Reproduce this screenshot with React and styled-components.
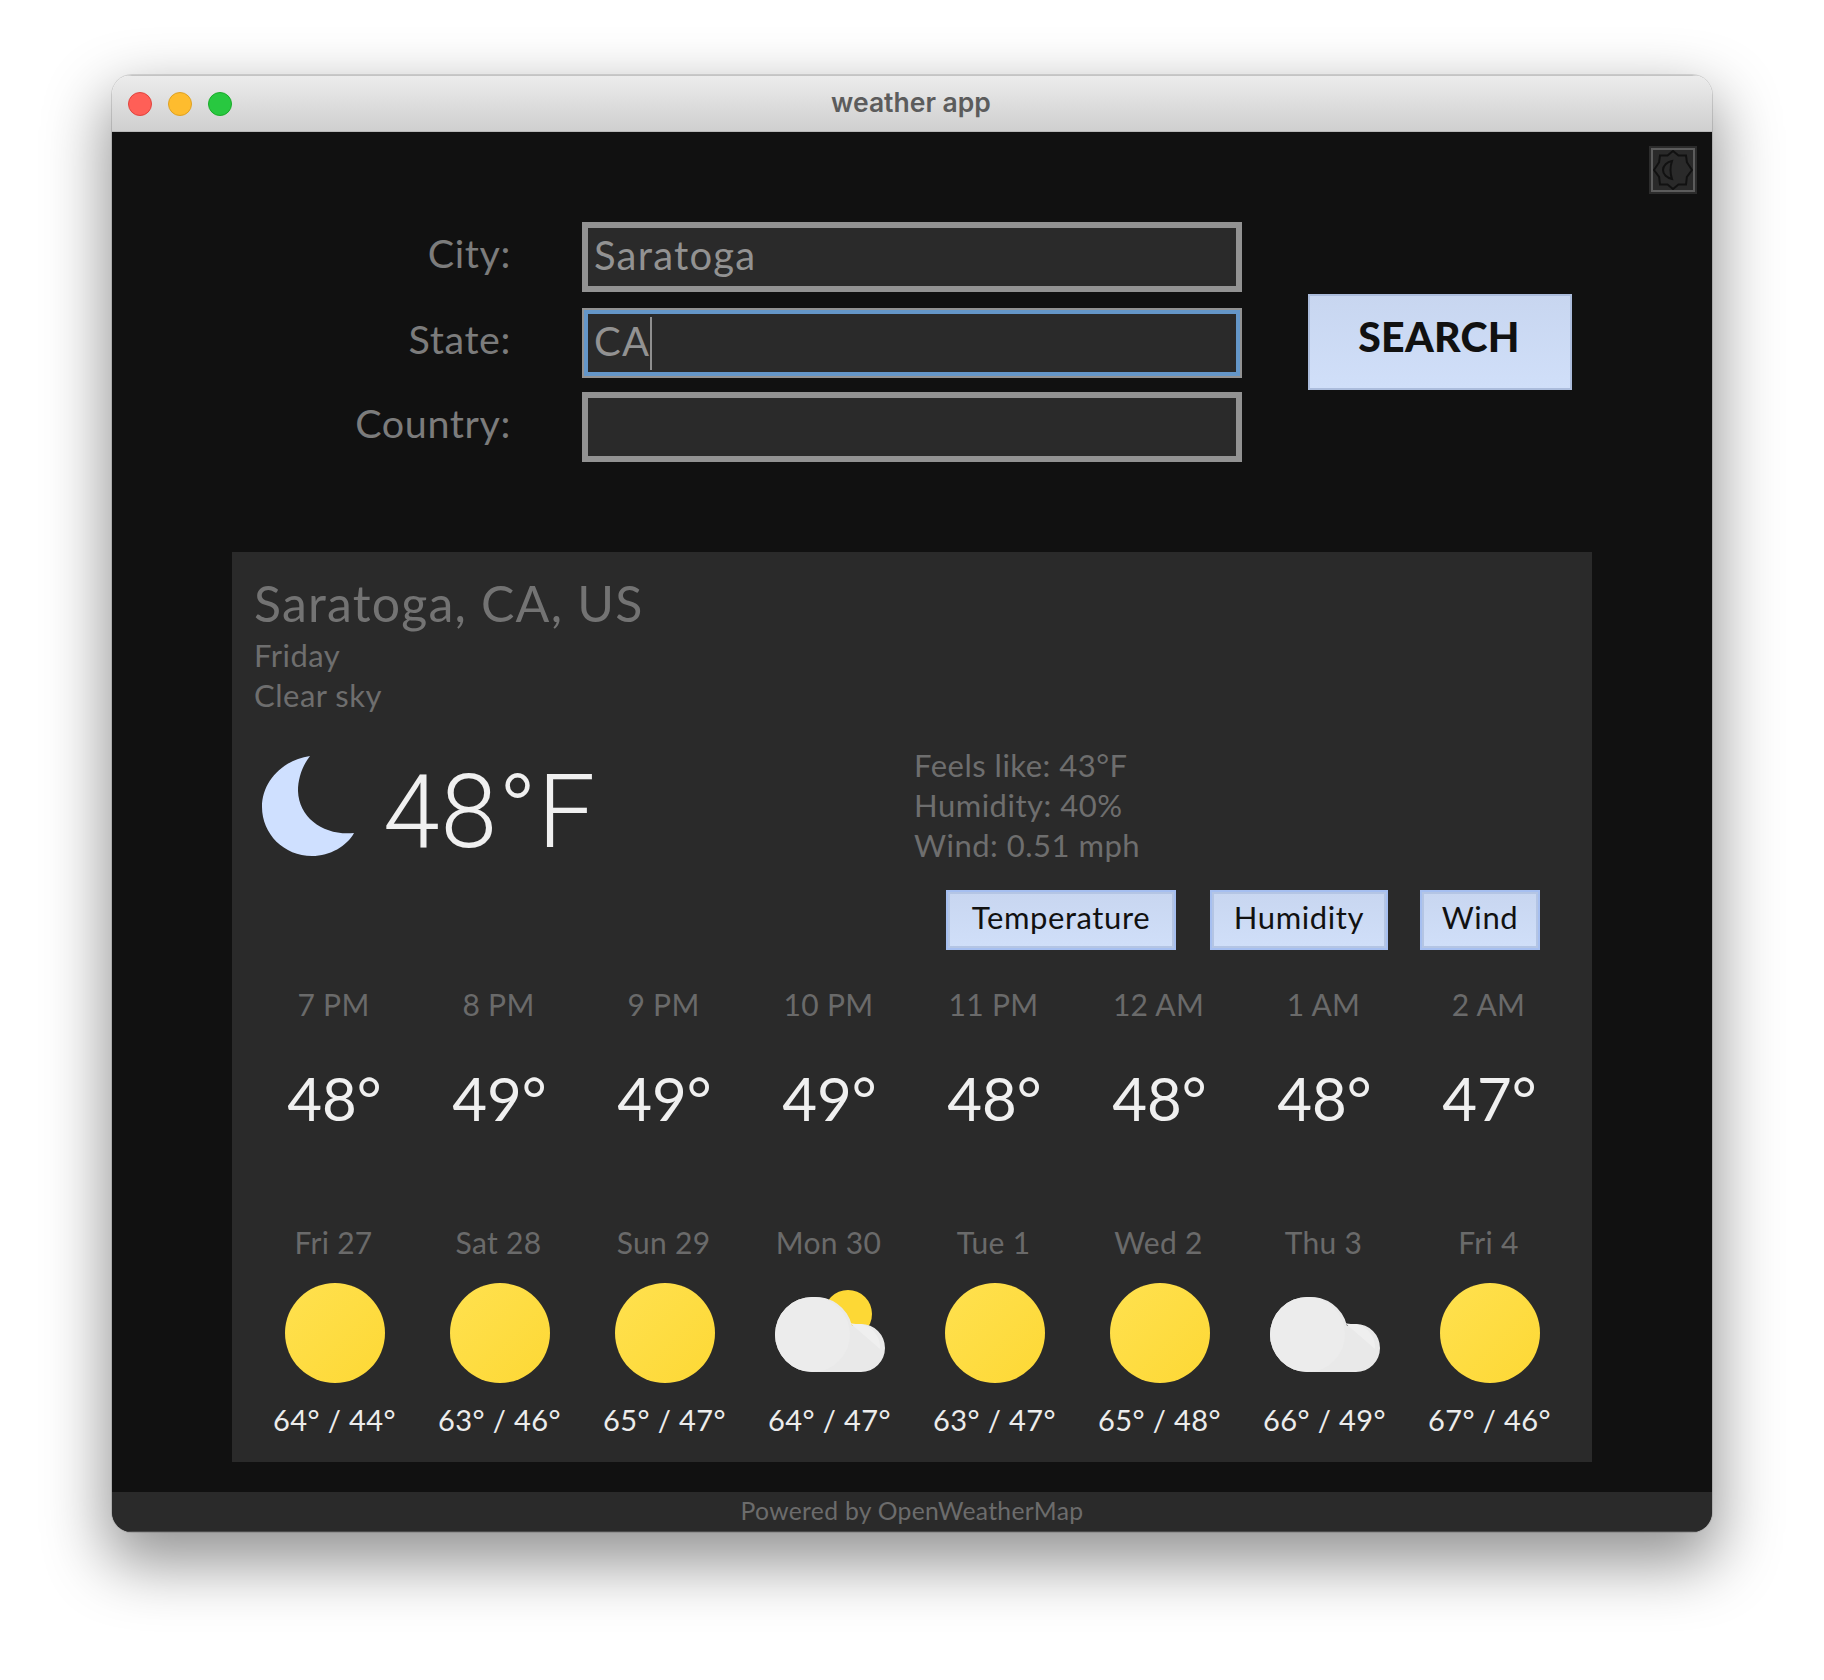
import React from "react";
import styled, { createGlobalStyle } from "styled-components";

const Global = createGlobalStyle`
  html, body { margin: 0; padding: 0; background: #fff; }
  body { font-family: Lato, "Noto Sans", sans-serif; width: 1824px; height: 1680px; overflow: hidden; }
  * { box-sizing: border-box; }
`;

const Page = styled.div`
  padding: 75px 112px 0;
`;
const Window = styled.div`
  width: 1600px;
  height: 1457px;
  border-radius: 20px;
  overflow: hidden;
  display: flex;
  flex-direction: column;
  box-shadow: 0 0 0 1px rgba(0,0,0,.12), 0 26px 62px 6px rgba(0,0,0,.42);
`;
const TitleBar = styled.div`
  height: 57px;
  flex: none;
  display: flex;
  align-items: center;
  position: relative;
  padding-left: 16px;
  gap: 16px;
  background: linear-gradient(#ececec, #cfcfcf);
  border-top: 1px solid #c4c4c4;
  border-bottom: 1px solid #b9b9b9;
`;
const Light = styled.span`
  width: 24px;
  height: 24px;
  border-radius: 50%;
  background: ${p => p.$c};
  border: 1px solid ${p => p.$b};
`;
const WindowTitle = styled.div`
  position: absolute;
  left: 0;
  right: 0;
  top: 13px;
  text-align: center;
  font: 600 26.500px/1 Inter, sans-serif;
  letter-spacing: 0;
  color: #5c5c5c;
  padding-right: 2px;
`;
const Content = styled.div`
  flex: 1;
  background: #111;
  position: relative;
  display: flex;
  flex-direction: column;
`;
const ThemeButton = styled.button`
  position: absolute;
  top: 16px;
  right: 17px;
  width: 44px;
  height: 44px;
  padding: 0;
  background: #2a2a2a;
  border: 2px solid #5c5c5c;
  outline: 2px solid #2c2c2c;
  display: flex;
  align-items: center;
  justify-content: center;
`;
const FormArea = styled.div`
  padding: 90px 0 0 120px;
  display: flex;
  align-items: center;
  gap: 66px;
`;
const FormGrid = styled.div`
  display: grid;
  grid-template-columns: 279px 660px;
  column-gap: 71px;
  grid-template-rows: 86px 84px 70px;
`;
const Label = styled.label`
  font-size: 39.500px;
  color: #7c7c7c;
  text-align: right;
  line-height: 62px;
  letter-spacing: 0.6px;
`;
const FieldWrap = styled.div`
  position: relative;
  height: 70px;
`;
const Field = styled.input`
  width: 660px;
  height: 70px;
  background: #2a2a2a;
  border: 6px solid #929292;
  outline: ${p => (p.$focus ? "4px solid #6496c8" : "none")};
  outline-offset: -6px;
  color: #929292;
  font: 400 40px Lato, sans-serif;
  letter-spacing: 1.200px;
  padding: 0 0 4px 6px;
`;
const Caret = styled.span`
  position: absolute;
  left: 68px;
  top: 9px;
  width: 2px;
  height: 53px;
  background: #8f8f8f;
`;
const SearchButton = styled.button`
  width: 264px;
  height: 96px;
  background: linear-gradient(#c8d6f0, #d0dff9);
  border: 2px solid #abbcdc;
  color: #111;
  font: 900 41px Lato, sans-serif;
  letter-spacing: 0.3px;
  padding: 0 2px 12px 0;
`;
const Panel = styled.section`
  width: 1360px;
  height: 910px;
  margin: 90px 0 0 120px;
  background: #2a2a2a;
  padding: 20px 20px 0;
  display: flex;
  flex-direction: column;
`;
const Place = styled.h1`
  margin: 0;
  font-weight: 400;
  font-size: 50px;
  line-height: 63px;
  color: #737373;
  letter-spacing: 1.200px;
  padding-left: 2px;
`;
const Sub = styled.div`
  font-size: 31px;
  line-height: 40px;
  color: #6e6e6e;
  letter-spacing: 0.5px;
  padding-left: 2px;
`;
const Current = styled.div`
  display: grid;
  grid-template-columns: 662px 1fr;
  margin-top: 30px;
  height: 145px;
`;
const Now = styled.div`
  display: flex;
  align-items: flex-start;
  padding: 11px 0 0 10px;
`;
const BigTemp = styled.div`
  font-family: Roboto, sans-serif;
  font-size: 102px;
  font-weight: 350;
  letter-spacing: 1px;
  line-height: 100px;
  color: #f0f0f0;
  margin-left: 29px;
  margin-top: 6px;
`;
const Details = styled.div`
  font-size: 31px;
  line-height: 40px;
  color: #6e6e6e;
  letter-spacing: 0.5px;
`;
const Tabs = styled.div`
  display: flex;
  justify-content: flex-end;
  padding-right: 32px;
  height: 60px;
`;
const Tab = styled.button`
  width: ${p => p.$w}px;
  margin-left: ${p => p.$ml}px;
  height: 60px;
  background: linear-gradient(#c8d6f0, #d0dff9);
  border: 2px solid #a6bff0;
  box-shadow: inset 0 0 0 2px #b4c5e4;
  color: #111;
  font: 400 31px Lato, sans-serif;
  letter-spacing: 0.6px;
  padding: 0 0 6px;
`;
const Hours = styled.div`
  display: grid;
  grid-template-columns: repeat(8, 165px);
  margin-top: 34px;
  height: 238px;
`;
const HourCell = styled.div`
  display: flex;
  flex-direction: column;
  align-items: center;
`;
const Small = styled.div`
  font-size: 30px;
  line-height: 40px;
  color: #6a6a6a;
  letter-spacing: 0.3px;
  transform: translateX(-1px);
`;
const HourTemp = styled.div`
  font-size: 60px;
  line-height: 70px;
  color: #f0f0f0;
  margin-top: 39px;
  font-weight: 400;
`;
const Days = styled.div`
  display: grid;
  grid-template-columns: repeat(8, 165px);
`;
const DayCell = styled.div`
  display: flex;
  flex-direction: column;
  align-items: center;
`;
const IconSlot = styled.div`
  width: 110px;
  height: 100px;
  margin-top: 21px;
  display: flex;
  justify-content: center;
`;
const Range = styled.div`
  font-size: 29px;
  line-height: 40px;
  margin-top: 17px;
  color: #ececec;
  white-space: nowrap;
  letter-spacing: 0.4px;
`;
const Footer = styled.footer`
  margin-top: 30px;
  height: 40px;
  background: #2a2a2a;
  border-bottom: 1px solid #4a4a4a;
  text-align: center;
  color: #6c6c6c;
  font-size: 24.700px;
  line-height: 38px;
  letter-spacing: 0.3px;
`;

const ThemeIcon = () => (
  <svg width="40" height="40" viewBox="0 0 40 40" fill="none" stroke="#111" strokeWidth="2">
    <path d="M20 1l5.500 4.500 7.500-.1.900 6.800L39 20l-5.100 6.800-.9 7.800-7.500-.1L20 39l-5.500-4.500-7.500.1-.9-7.800L1 20l5.100-7.800.9-6.800 7.500.1z" />
    <path d="M19 11c-5 1-9 4.500-9 9s4 8 9 9c-1-3-1.500-6-1.500-9s.5-6 1.500-9z" />
  </svg>
);
const Moon = () => (
  <svg width="92" height="100" viewBox="0 0 92 100">
    <path fill="#cfe0ff" d="M48 0C20 4 0 26 0 51c0 27 22 49 50 49 18 0 35-10 42-23-29 3-55-14-56-42 0-12 4-25 12-35z" />
  </svg>
);
const Sun = () => (
  <svg width="100" height="100" viewBox="0 0 100 100">
    <defs>
      <linearGradient id="sg" x1="0" y1="0" x2="1" y2="1">
        <stop offset="0" stopColor="#ffe14f" />
        <stop offset="1" stopColor="#fdd835" />
      </linearGradient>
    </defs>
    <circle cx="50" cy="50" r="50" fill="url(#sg)" />
  </svg>
);
const Cloud = ({ sun }) => (
  <svg width="110" height="100" viewBox="0 0 110 100" style={{ flex: "none" }}>
    {sun && <circle cx="73" cy="31" r="24" fill="#fdd835" />}
    <path fill="#e9e9e9" d="M37.500 14a37.500 37.500 0 0 0 0 75H86a24 24 0 0 0 0-48c-3 0-6 .6-9 1.700A37.500 37.500 0 0 0 37.500 14z" />
    <path fill="#efefef" d="M75 40l30 26a24 24 0 0 0-19-25c-4 0-8 .2-11-1z" />
    <circle cx="37.500" cy="51.500" r="37.500" fill="#ececec" />
  </svg>
);

const hours = [["7 PM", "48°"], ["8 PM", "49°"], ["9 PM", "49°"], ["10 PM", "49°"], ["11 PM", "48°"], ["12 AM", "48°"], ["1 AM", "48°"], ["2 AM", "47°"]];
const days = [
  ["Fri 27", "64° / 44°", "sun"], ["Sat 28", "63° / 46°", "sun"], ["Sun 29", "65° / 47°", "sun"], ["Mon 30", "64° / 47°", "partly"],
  ["Tue 1", "63° / 47°", "sun"], ["Wed 2", "65° / 48°", "sun"], ["Thu 3", "66° / 49°", "cloud"], ["Fri 4", "67° / 46°", "sun"],
];

export default function App() {
  return (
    <Page>
      <Global />
      <Window>
        <TitleBar>
          <Light $c="#ff5f57" $b="#e0443e" />
          <Light $c="#febc2e" $b="#dea123" />
          <Light $c="#28c840" $b="#1aab29" />
          <WindowTitle>weather app</WindowTitle>
        </TitleBar>
        <Content>
          <ThemeButton aria-label="Toggle theme"><ThemeIcon /></ThemeButton>
          <FormArea>
            <FormGrid>
              <Label>City:</Label>
              <FieldWrap><Field readOnly value="Saratoga" /></FieldWrap>
              <Label>State:</Label>
              <FieldWrap><Field $focus readOnly value="CA" /><Caret /></FieldWrap>
              <Label>Country:</Label>
              <FieldWrap><Field readOnly value="" /></FieldWrap>
            </FormGrid>
            <SearchButton>SEARCH</SearchButton>
          </FormArea>
          <Panel>
            <Place>Saratoga, CA, US</Place>
            <Sub>Friday</Sub>
            <Sub>Clear sky</Sub>
            <Current>
              <Now><Moon /><BigTemp>48°F</BigTemp></Now>
              <Details>
                <div>Feels like: 43°F</div>
                <div>Humidity: 40%</div>
                <div>Wind: 0.51 mph</div>
              </Details>
            </Current>
            <Tabs>
              <Tab $w={230} $ml={0}>Temperature</Tab>
              <Tab $w={178} $ml={34}>Humidity</Tab>
              <Tab $w={120} $ml={32}>Wind</Tab>
            </Tabs>
            <Hours>
              {hours.map(([h, t]) => (
                <HourCell key={h}><Small>{h}</Small><HourTemp>{t}</HourTemp></HourCell>
              ))}
            </Hours>
            <Days>
              {days.map(([d, r, k]) => (
                <DayCell key={d}>
                  <Small>{d}</Small>
                  <IconSlot>{k === "sun" ? <Sun /> : <Cloud sun={k === "partly"} />}</IconSlot>
                  <Range>{r}</Range>
                </DayCell>
              ))}
            </Days>
          </Panel>
          <Footer>Powered by OpenWeatherMap</Footer>
        </Content>
      </Window>
    </Page>
  );
}
